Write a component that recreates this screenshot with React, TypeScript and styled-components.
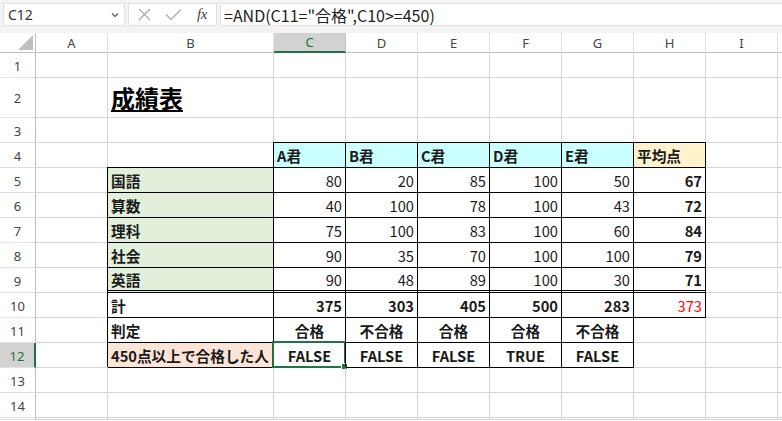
import React from "react";
import styled, { createGlobalStyle } from "styled-components";

const GRID = "#d4d4d4";
const HEAD_LINE = "#bfbfbf";
const GREEN = "#217346";
const FONT = `"Noto Sans CJK JP", "Noto Sans", sans-serif`;

const GlobalStyle = createGlobalStyle`
  html, body {
    margin: 0;
    padding: 0;
    background: #fff;
    overflow: hidden;
  }
  body {
    font-family: ${FONT};
  }
`;

type Align = "left" | "center" | "right";

type Spec = {
  text?: string;
  fill?: string;
  boxed?: boolean;
  align?: Align;
  bold?: boolean;
  color?: string;
  double?: boolean;
  title?: boolean;
};

const COLS = ["A", "B", "C", "D", "E", "F", "G", "H", "I", ""];

const scores: [string, number[], number][] = [
  ["国語", [80, 20, 85, 100, 50], 67],
  ["算数", [40, 100, 78, 100, 43], 72],
  ["理科", [75, 100, 83, 100, 60], 84],
  ["社会", [90, 35, 70, 100, 100], 79],
  ["英語", [90, 48, 89, 100, 30], 71],
];

const totals = [375, 303, 405, 500, 283];
const results = ["合格", "不合格", "合格", "合格", "不合格"];
const passed = ["FALSE", "FALSE", "FALSE", "TRUE", "FALSE"];

const emptyRow = (): Spec[] => COLS.map(() => ({}));

const buildRows = (): Spec[][] => {
  const rows: Spec[][] = [];
  rows.push(emptyRow());
  const title = emptyRow();
  title[1] = { text: "成績表", title: true };
  rows.push(title);
  rows.push(emptyRow());

  const head = emptyRow();
  ["A君", "B君", "C君", "D君", "E君"].forEach((t, i) => {
    head[i + 2] = { text: t, fill: "#ccffff", boxed: true, bold: true };
  });
  head[7] = { text: "平均点", fill: "#fff2cc", boxed: true, bold: true };
  rows.push(head);

  scores.forEach(([name, vals, avg], r) => {
    const last = r === scores.length - 1;
    const row = emptyRow();
    row[1] = { text: name, fill: "#e2efda", boxed: true, bold: true, double: last };
    vals.forEach((v, i) => {
      row[i + 2] = { text: String(v), boxed: true, align: "right", double: last };
    });
    row[7] = { text: String(avg), boxed: true, align: "right", bold: true, double: last };
    rows.push(row);
  });

  const sum = emptyRow();
  sum[1] = { text: "計", boxed: true, bold: true };
  totals.forEach((v, i) => {
    sum[i + 2] = { text: String(v), boxed: true, align: "right", bold: true };
  });
  sum[7] = { text: "373", boxed: true, align: "right", color: "#ff0000" };
  rows.push(sum);

  const judge = emptyRow();
  judge[1] = { text: "判定", boxed: true, bold: true };
  results.forEach((v, i) => {
    judge[i + 2] = { text: v, boxed: true, align: "center", bold: true };
  });
  rows.push(judge);

  const pass = emptyRow();
  pass[1] = { text: "450点以上で合格した人", fill: "#fce4d6", boxed: true, bold: true };
  passed.forEach((v, i) => {
    pass[i + 2] = { text: v, boxed: true, align: "center", bold: true };
  });
  rows.push(pass);

  rows.push(emptyRow(), emptyRow(), emptyRow());
  return rows;
};

const ROWS = buildRows();
const SELECTED_ROW = 12;
const SELECTED_COL = "C";
// row 15 only peeks in at the bottom edge, its number is below the fold
const VISIBLE_ROWS = 14;

const Window = styled.div`
  width: 782px;
  height: 421px;
  overflow: hidden;
  display: flex;
  flex-direction: column;
  background: #fff;
`;

const FormulaBar = styled.div`
  height: 33px;
  flex: none;
  box-sizing: border-box;
  display: flex;
  align-items: flex-start;
  gap: 3px;
  padding: 3px 0 0 3px;
  background: #f3f3f3;
`;

const Field = styled.div<{ $width?: number }>`
  height: 23px;
  box-sizing: border-box;
  background: #fff;
  border: 1px solid #e1e1e1;
  display: flex;
  align-items: center;
  ${(p) => (p.$width ? `width: ${p.$width}px; flex: none;` : "flex: 1; margin-right: -4px;")}
`;

const NameText = styled.span`
  flex: 1;
  padding-left: 4px;
  font-family: "Noto Sans", sans-serif;
  font-size: 14px;
  color: #333;
`;

const Chevron = styled.svg`
  width: 8px;
  height: 6px;
  margin-right: 5px;
`;

const Actions = styled.div`
  display: flex;
  align-items: center;
  width: 100%;
  height: 100%;
  padding-left: 9px;
  box-sizing: border-box;
`;

const ActionIcon = styled.svg<{ $gap?: number }>`
  flex: none;
  margin-left: ${(p) => p.$gap ?? 0}px;
`;

const Fx = styled.span`
  margin-left: 15px;
  font-family: "Liberation Serif", serif;
  font-style: italic;
  font-size: 15px;
  color: #444;
  letter-spacing: -0.5px;
`;

const FormulaText = styled.span`
  padding-left: 3px;
  font-family: ${FONT};
  font-size: 16px;
  color: #222;
  white-space: nowrap;
`;

const Sheet = styled.div`
  flex: none;
  display: grid;
  grid-template-columns: 36px 72px 166px repeat(7, 72px) 1fr;
  grid-template-rows: 20px 25px 40px repeat(12, 25px);
`;

const Corner = styled.div`
  box-sizing: border-box;
  border-right: 1px solid ${HEAD_LINE};
  border-bottom: 1px solid ${HEAD_LINE};
  display: flex;
  align-items: flex-end;
  justify-content: flex-end;
  padding: 0 2px 2px 0;
`;

const ColHead = styled.div<{ $selected?: boolean }>`
  box-sizing: border-box;
  display: flex;
  align-items: center;
  justify-content: center;
  font-family: "Noto Sans", sans-serif;
  font-size: 13px;
  color: ${(p) => (p.$selected ? GREEN : "#444")};
  background: ${(p) => (p.$selected ? "#d2d2d2" : "#fff")};
  border-right: 1px solid ${(p) => (p.$selected ? "#c6c6c6" : "#e1e1e1")};
  border-bottom: ${(p) => (p.$selected ? `2px solid ${GREEN}` : `1px solid ${HEAD_LINE}`)};
`;

const RowHead = styled.div<{ $selected?: boolean }>`
  box-sizing: border-box;
  display: flex;
  align-items: center;
  justify-content: center;
  padding-top: 1px;
  font-family: "Noto Sans", sans-serif;
  font-size: 13px;
  color: ${(p) => (p.$selected ? GREEN : "#444")};
  background: ${(p) => (p.$selected ? "#d2d2d2" : "#fff")};
  border-right: ${(p) => (p.$selected ? `2px solid ${GREEN}` : `1px solid ${HEAD_LINE}`)};
  border-bottom: 1px solid #e1e1e1;
`;

const Cell = styled.div<{
  $fill?: string;
  $boxed?: boolean;
  $align?: Align;
  $bold?: boolean;
  $color?: string;
  $double?: boolean;
  $bottom?: boolean;
}>`
  position: relative;
  box-sizing: border-box;
  min-width: 0;
  display: flex;
  align-items: ${(p) => (p.$bottom ? "flex-end" : "center")};
  justify-content: ${(p) =>
    p.$align === "right" ? "flex-end" : p.$align === "center" ? "center" : "flex-start"};
  padding: ${(p) => (p.$bottom ? "0 3px 4px" : "1px 3px 0")};
  white-space: nowrap;
  font-size: 14.67px;
  font-weight: ${(p) => (p.$bold ? 700 : 400)};
  color: ${(p) => p.$color ?? "#1a1a1a"};
  background: ${(p) => p.$fill ?? "transparent"};
  border-right: 1px solid ${(p) => (p.$boxed ? "#000" : GRID)};
  border-bottom: ${(p) =>
    p.$double ? "3px double #000" : `1px solid ${p.$boxed ? "#000" : GRID}`};
  ${(p) => (p.$boxed ? "box-shadow: -1px -1px 0 #000, 0 -1px 0 #000;" : "")}
`;

const Title = styled.span`
  font-size: 24px;
  font-weight: 700;
  line-height: 30px;
  text-decoration: underline;
  text-decoration-thickness: 2px;
  text-underline-offset: 2px;
  color: #000;
`;

const Selection = styled.div`
  position: absolute;
  left: -2px;
  top: -2px;
  right: -1px;
  bottom: -1px;
  border: 2px solid ${GREEN};
  pointer-events: none;
`;

const Handle = styled.div`
  position: absolute;
  right: -4px;
  bottom: -4px;
  width: 5px;
  height: 5px;
  background: ${GREEN};
  border: 1px solid #fff;
`;

export default function App() {
  return (
    <Window>
      <GlobalStyle />
      <FormulaBar>
        <Field $width={122}>
          <NameText>C12</NameText>
          <Chevron viewBox="0 0 8 6">
            <path d="M1 1.5 L4 4.5 L7 1.5" fill="none" stroke="#555" strokeWidth="1.1" />
          </Chevron>
        </Field>
        <Field $width={89}>
          <Actions>
            <ActionIcon width="13" height="13" viewBox="0 0 13 13">
              <path d="M1 1 L12 12 M12 1 L1 12" stroke="#a6a6a6" strokeWidth="1.1" fill="none" />
            </ActionIcon>
            <ActionIcon $gap={14} width="17" height="13" viewBox="0 0 17 13">
              <path d="M1 6.5 L6 11.5 L16 1.5" stroke="#a6a6a6" strokeWidth="1.1" fill="none" />
            </ActionIcon>
            <Fx>fx</Fx>
          </Actions>
        </Field>
        <Field>
          <FormulaText>=AND(C11="合格",C10&gt;=450)</FormulaText>
        </Field>
      </FormulaBar>
      <Sheet>
        <Corner>
          <svg width="15" height="15" viewBox="0 0 15 15">
            <path d="M15 0 L15 15 L0 15 Z" fill="#bfbfbf" />
          </svg>
        </Corner>
        {COLS.map((c, i) => (
          <ColHead key={i} $selected={c === SELECTED_COL}>
            {c}
          </ColHead>
        ))}
        {ROWS.map((row, r) => (
          <React.Fragment key={r}>
            <RowHead $selected={r + 1 === SELECTED_ROW}>
              {r < VISIBLE_ROWS ? r + 1 : null}
            </RowHead>
            {row.map((cell, c) => (
              <Cell
                key={c}
                $fill={cell.fill}
                $boxed={cell.boxed}
                $align={cell.align}
                $bold={cell.bold}
                $color={cell.color}
                $double={cell.double}
                $bottom={cell.title}
              >
                {cell.title ? <Title>{cell.text}</Title> : cell.text}
                {r + 1 === SELECTED_ROW && COLS[c] === SELECTED_COL && (
                  <Selection>
                    <Handle />
                  </Selection>
                )}
              </Cell>
            ))}
          </React.Fragment>
        ))}
      </Sheet>
    </Window>
  );
}
